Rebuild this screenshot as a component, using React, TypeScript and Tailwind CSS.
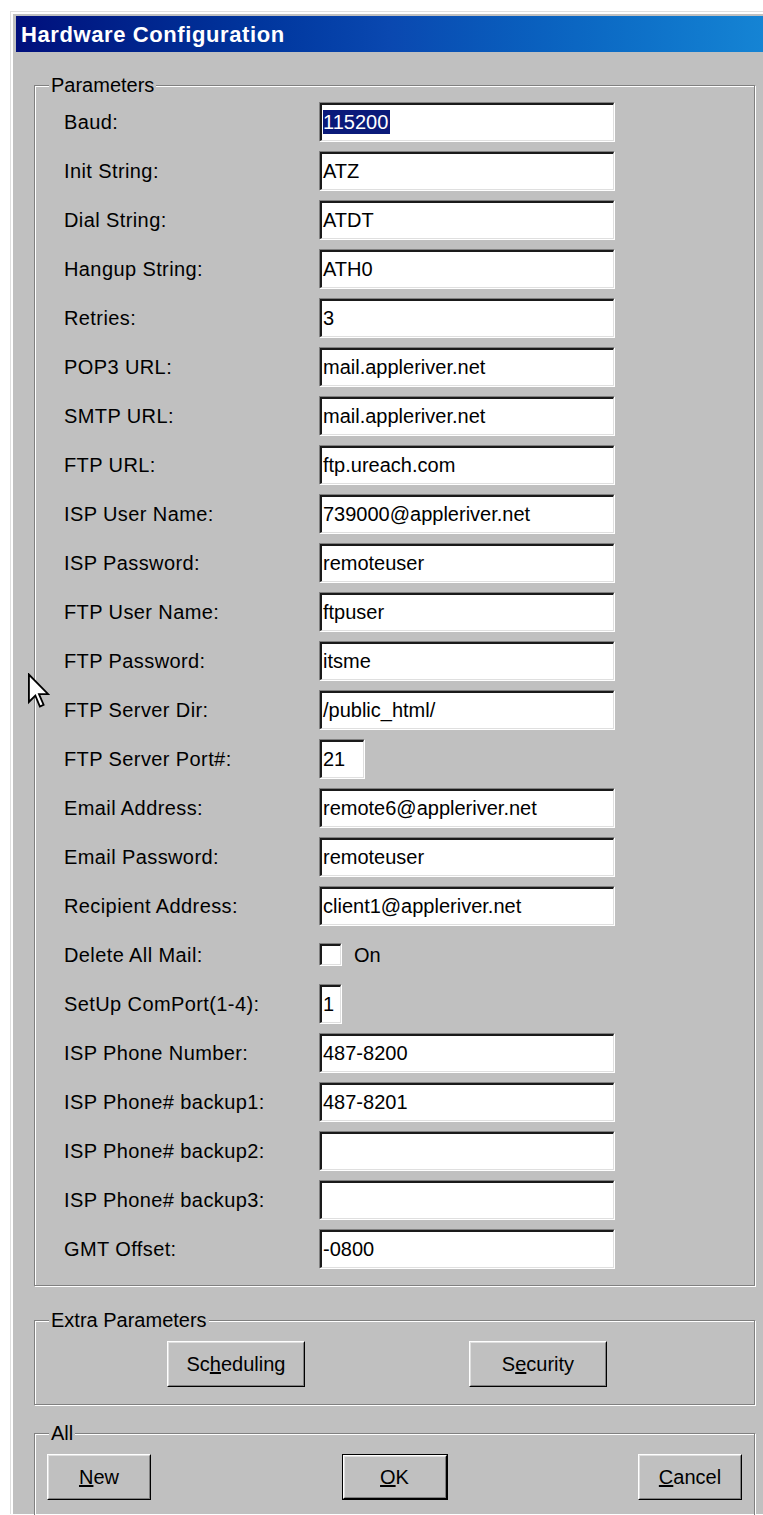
import type { ReactNode } from "react";

type Row = {
  label: string;
  value?: string;
  kind?: "text" | "port" | "check" | "com";
  selected?: boolean;
};

const rows: Row[] = [
  { label: "Baud:", value: "115200", selected: true },
  { label: "Init String:", value: "ATZ" },
  { label: "Dial String:", value: "ATDT" },
  { label: "Hangup String:", value: "ATH0" },
  { label: "Retries:", value: "3" },
  { label: "POP3 URL:", value: "mail.appleriver.net" },
  { label: "SMTP URL:", value: "mail.appleriver.net" },
  { label: "FTP URL:", value: "ftp.ureach.com" },
  { label: "ISP User Name:", value: "739000@appleriver.net" },
  { label: "ISP Password:", value: "remoteuser" },
  { label: "FTP User Name:", value: "ftpuser" },
  { label: "FTP Password:", value: "itsme" },
  { label: "FTP Server Dir:", value: "/public_html/" },
  { label: "FTP Server Port#:", value: "21", kind: "port" },
  { label: "Email Address:", value: "remote6@appleriver.net" },
  { label: "Email Password:", value: "remoteuser" },
  { label: "Recipient Address:", value: "client1@appleriver.net" },
  { label: "Delete All Mail:", kind: "check" },
  { label: "SetUp ComPort(1-4):", value: "1", kind: "com" },
  { label: "ISP Phone Number:", value: "487-8200" },
  { label: "ISP Phone# backup1:", value: "487-8201" },
  { label: "ISP Phone# backup2:", value: "" },
  { label: "ISP Phone# backup3:", value: "" },
  { label: "GMT Offset:", value: "-0800" },
];

// sunken edit box, win2k style
function Field({ width, children }: { width: string; children?: ReactNode }) {
  return (
    <div
      className={`${width} h-[40px] border border-t-[#808080] border-l-[#808080] border-r-white border-b-white`}
    >
      <div className="h-full border-t-2 border-l-2 border-t-[#1a1a1a] border-l-[#1a1a1a] border-r border-b border-r-[#dfdfdf] border-b-[#dfdfdf] bg-white flex items-center pl-[1px] overflow-hidden whitespace-nowrap">
        {children}
      </div>
    </div>
  );
}

function Group({ title, children, className = "" }: { title: string; children: ReactNode; className?: string }) {
  return (
    <fieldset
      className={`border border-[#808080] shadow-[inset_1px_1px_0_#ffffff,1px_1px_0_#ffffff] ${className}`}
    >
      <legend className="ml-[14px] px-[2px] text-[20px] leading-[24px] bg-[#c0c0c0]">{title}</legend>
      {children}
    </fieldset>
  );
}

function Button({
  children,
  width,
  isDefault = false,
}: {
  children: ReactNode;
  width: string;
  isDefault?: boolean;
}) {
  return (
    <div className={`${width} h-[46px] ${isDefault ? "border border-black" : ""}`}>
      <div className="h-full border border-t-white border-l-white border-r-black border-b-black">
        <div className="h-full border border-t-[#dfdfdf] border-l-[#dfdfdf] border-r-[#808080] border-b-[#808080] flex items-center justify-center text-[20px]">
          {children}
        </div>
      </div>
    </div>
  );
}

function Cursor() {
  return (
    <svg className="absolute left-[28px] top-[673px]" width="22" height="36" viewBox="0 0 12 19">
      <path
        d="M0.5 0.5 L0.5 15.5 L4 12 L6.5 18 L8.5 17 L6 11.2 L11 11.2 Z"
        fill="#ffffff"
        stroke="#000000"
        strokeWidth="1"
        strokeLinejoin="miter"
      />
    </svg>
  );
}

export default function App() {
  return (
    <div className="relative min-h-[1515px] bg-white pl-[10px] pt-[11px] font-['Liberation_Sans',Arial,sans-serif] text-black overflow-hidden">
      <div className="border-l border-t border-[#dfdfdf]">
        <div className="border-l-2 border-t-2 border-white bg-[#c0c0c0] pl-[3px] pt-[2px] h-[1502px]">
          {/* title bar */}
          <div className="h-[36px] bg-gradient-to-r from-[#000e7c] via-[#0a48b0] to-[#1584d4] flex items-center pl-[5px]">
            <span className="text-white font-bold text-[22px] tracking-[0.6px]">Hardware Configuration</span>
          </div>

          <div className="pl-[18px] pr-[8px] pt-[21px]">
            <Group title="Parameters" className="pb-[12px]">
              {rows.map((r) => (
                <div key={r.label} className="flex items-center h-[49px]">
                  <div className="w-[284px] shrink-0 pl-[29px] text-[20px] tracking-[0.4px]">{r.label}</div>
                  {r.kind === "check" ? (
                    <div className="flex items-center gap-[12px]">
                      <Field width="w-[23px] !h-[23px]" />
                      <span className="text-[20px]">On</span>
                    </div>
                  ) : r.kind === "com" ? (
                    <Field width="w-[23px]">
                      <span className="text-[20px]">{r.value}</span>
                    </Field>
                  ) : r.kind === "port" ? (
                    <Field width="w-[46px]">
                      <span className="text-[20px]">{r.value}</span>
                    </Field>
                  ) : (
                    <Field width="w-[296px]">
                      <span
                        className={`text-[20px] leading-[24px] ${r.selected ? "bg-[#0a1a7a] text-white pr-[2px]" : ""}`}
                      >
                        {r.value}
                      </span>
                    </Field>
                  )}
                </div>
              ))}
            </Group>

            <Group title="Extra Parameters" className="mt-[22px] pt-[9px] pb-[17px]">
              <div className="flex pl-[132px] gap-[164px]">
                <Button width="w-[138px]">
                  <span>
                    Sc<u>h</u>eduling
                  </span>
                </Button>
                <Button width="w-[138px]">
                  <span>
                    S<u>e</u>curity
                  </span>
                </Button>
              </div>
            </Group>

            <Group title="All" className="mt-[16px] pt-[9px] pb-[20px]">
              <div className="flex justify-between px-[12px]">
                <Button width="w-[104px]">
                  <span>
                    <u>N</u>ew
                  </span>
                </Button>
                <Button width="w-[106px]" isDefault>
                  <span>
                    <u>O</u>K
                  </span>
                </Button>
                <Button width="w-[104px]">
                  <span>
                    <u>C</u>ancel
                  </span>
                </Button>
              </div>
            </Group>
          </div>
        </div>
      </div>
      <Cursor />
    </div>
  );
}
